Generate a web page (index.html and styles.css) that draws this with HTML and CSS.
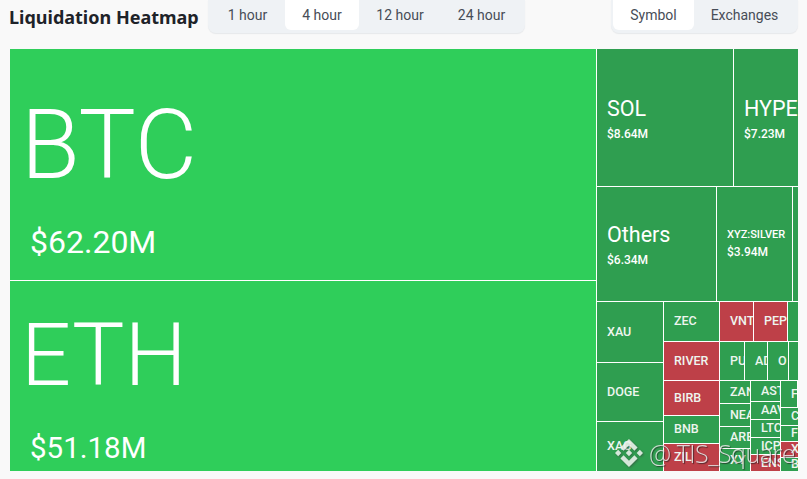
FILE: index.html
```html
<!DOCTYPE html>
<html lang="en">
<head>
<meta charset="utf-8">
<title>Liquidation Heatmap</title>
<link rel="stylesheet" href="styles.css">
</head>
<body>
<div class="page">
  <header class="head">
    <h1 class="title">Liquidation Heatmap</h1>
    <div class="tabs tabs-time">
      <span class="tab t-1">1 hour</span>
      <span class="tab t-4 on">4 hour</span>
      <span class="tab t-12">12 hour</span>
      <span class="tab t-24">24 hour</span>
    </div>
    <div class="tabs tabs-group">
      <span class="tab t-sym on">Symbol</span>
      <span class="tab t-ex">Exchanges</span>
    </div>
  </header>
  <main class="map">
    <div class="col" style="width:586px">
      <div class="tile up xl" style="height:231px"><span class="sym">BTC</span><span class="val">$62.20M</span></div>
      <div class="tile up xl eth" style="flex:1"><span class="sym">ETH</span><span class="val">$51.18M</span></div>
    </div>
    <div class="col" style="flex:1">
      <div class="row" style="height:137px">
        <div class="tile dn md" style="width:136px"><span class="sym">SOL</span><span class="val">$8.64M</span></div>
        <div class="tile dn md" style="flex:1"><span class="sym">HYPE</span><span class="val">$7.23M</span></div>
      </div>
      <div class="row" style="height:114px">
        <div class="tile dn md" style="width:119px"><span class="sym">Others</span><span class="val">$6.34M</span></div>
        <div class="tile dn sm" style="width:75px"><span class="sym">XYZ:SILVER</span><span class="val">$3.94M</span></div>
        <div class="tile dn fill" style="flex:1"></div>
      </div>
      <div class="row" style="flex:1">
        <div class="col" style="width:66px">
          <div class="tile dn xs" style="height:60px"><span class="sym">XAU</span></div>
          <div class="tile dn xs" style="height:58px"><span class="sym">DOGE</span></div>
          <div class="tile dn xs" style="flex:1"><span class="sym">XAG</span></div>
        </div>
        <div class="col" style="width:55px">
          <div class="tile dn xs" style="height:39px"><span class="sym">ZEC</span></div>
          <div class="tile rd xs" style="height:38px"><span class="sym">RIVER</span></div>
          <div class="tile rd xs" style="height:34px"><span class="sym">BIRB</span></div>
          <div class="tile dn xs" style="height:27px"><span class="sym">BNB</span></div>
          <div class="tile rd xs" style="flex:1"><span class="sym">ZIL</span></div>
        </div>
        <div class="col" style="flex:1">
          <div class="row" style="height:39px">
            <div class="tile rd xs" style="width:33px"><span class="sym">VNT</span></div>
            <div class="tile rd xs" style="width:33px"><span class="sym">PEP</span></div>
            <div class="tile dn fill" style="flex:1"></div>
          </div>
          <div class="row" style="height:38px">
            <div class="tile dn xs" style="width:24px"><span class="sym">PU</span></div>
            <div class="tile dn xs" style="width:22px"><span class="sym">AD</span></div>
            <div class="tile dn xs" style="width:20px"><span class="sym">O</span></div>
            <div class="tile dn fill" style="flex:1"></div>
          </div>
          <div class="row" style="flex:1">
            <div class="col" style="width:30px">
              <div class="tile dn xs" style="height:22px"><span class="sym">ZAN</span></div>
              <div class="tile dn xs" style="height:22px"><span class="sym">NEA</span></div>
              <div class="tile dn xs" style="height:21px"><span class="sym">ARE</span></div>
              <div class="tile dn xs" style="flex:1"><span class="sym">XY</span></div>
            </div>
            <div class="col" style="width:29px">
              <div class="tile dn xs" style="height:20px"><span class="sym">AST</span></div>
              <div class="tile dn xs" style="height:17px"><span class="sym">AAV</span></div>
              <div class="tile dn xs" style="height:17px"><span class="sym">LTC</span></div>
              <div class="tile dn xs" style="height:16px"><span class="sym">ICP</span></div>
              <div class="tile rd xs" style="flex:1"><span class="sym">ENS</span></div>
            </div>
            <div class="col" style="flex:1">
              <div class="tile dn xs inset" style="height:26px"><span class="sym">F</span></div>
              <div class="tile dn xs" style="height:17px"><span class="sym">C</span></div>
              <div class="tile dn xs" style="height:15px"><span class="sym">F</span></div>
              <div class="tile rd xs" style="height:15px"><span class="sym">X</span></div>
              <div class="tile dn xs" style="flex:1"><span class="sym">B</span></div>
            </div>
          </div>
        </div>
      </div>
    </div>
  </main>
  <div class="mark">
    <svg class="mark-logo" viewBox="0 0 24 24" aria-hidden="true"><path d="M16.624 13.9202l2.7175 2.7154-7.353 7.353-7.353-7.352 2.7175-2.7164 4.6355 4.6595 4.6356-4.6595zm4.6366-4.6366L24 12l-2.7154 2.7164L18.5682 12l2.6924-2.7164zm-9.272.001l2.7163 2.6914-2.7164 2.7174v-.001L9.2721 12l2.7164-2.7154zm-9.2722-.001L5.4088 12l-2.6914 2.6924L0 12l2.7164-2.7164zM11.9885.0115l7.353 7.329-2.7174 2.7154-4.6356-4.6356-4.6355 4.6595-2.7174-2.7154 7.353-7.353z"/></svg>
    <span class="mark-text">@ TIS_Square</span>
  </div>
</div>
</body>
</html>
```
FILE: styles.css
```css
* { box-sizing: border-box; }
html, body { margin: 0; padding: 0; }
body { background: #f9f9f9; font-family: Roboto, "Liberation Sans", sans-serif; overflow: hidden; }
.page { position: relative; width: 807px; height: 479px; overflow: hidden; padding: 0 9px 0 10px; }
.head { display: flex; align-items: flex-start; height: 49px; }
.title { margin: 5px 0 0 -1px; width: 199px; font-family: "Noto Sans", sans-serif; font-size: 18px; font-weight: 700; line-height: 24px; color: #1e2329; white-space: nowrap; }
.tabs { display: flex; height: 33px; padding: 0 0 3px; background: #eff2f5; border-radius: 0 0 8px 8px; box-shadow: 0 1px 1px #e6e8ea; }
.tabs-time { padding-left: 2px; width: 317px; }
.tabs-group { margin-left: auto; padding-left: 2px; width: 187px; }
.tab { display: flex; align-items: center; justify-content: center; font-size: 14px; color: #474d57; border-radius: 0 0 6px 6px; }
.tab.on { background: #fff; }
.t-1 { width: 75px; }
.t-4 { width: 74px; }
.t-12 { width: 82px; }
.t-24 { width: 81px; }
.t-sym { width: 81px; }
.t-ex { flex: 1; padding-right: 3px; }
.map { display: flex; gap: 1px; height: 422px; background: #fff; }
.col { display: flex; flex-direction: column; gap: 1px; min-width: 0; }
.row { display: flex; gap: 1px; min-height: 0; }
.tile { display: flex; flex-direction: column; justify-content: center; overflow: hidden; flex-shrink: 0; min-width: 0; min-height: 0; color: #fff; padding-left: 10px; white-space: nowrap; }
.up { background: #2fce5a; }
.dn { background: #2f9e50; }
.rd { background: #be4048; }
.fill { padding-left: 0; }
.inset { margin-right: 1px; }
.sym, .val { display: block; }
.xl { padding-left: 20px; }
.xl .sym { font-size: 96px; font-weight: 350; line-height: 106px; margin-left: -9px; margin-top: 24px; }
.xl .val { font-size: 32px; font-weight: 400; line-height: 40px; margin-top: 24px; }
.eth .sym { font-size: 88px; line-height: 100px; margin-left: -9px; margin-top: 20px; }
.eth .val { font-size: 29.5px; margin-top: 23px; }
.md .sym { font-size: 21.5px; line-height: 28px; margin-top: 2px; }
.md .val { font-size: 12px; font-weight: 500; line-height: 18px; margin-top: 2px; }
.sm .sym { font-size: 11px; font-weight: 500; line-height: 16px; }
.sm .val { font-size: 12px; font-weight: 500; line-height: 18px; }
.xs { padding-bottom: 1px; }
.xs .sym { font-size: 12.5px; font-weight: 500; line-height: 16px; color: #eef5ef; }
.mark { position: absolute; left: 615px; top: 439px; display: flex; align-items: center; gap: 6px; opacity: .88; white-space: nowrap; }
.mark-logo { width: 28px; height: 28px; fill: #eef2ee; filter: drop-shadow(1px 1px 1px rgba(60,60,60,.6)); }
.mark-text { font-family: "Open Sans", sans-serif; font-size: 25px; font-weight: 300; letter-spacing: -.5px; line-height: 28px; color: #e6e6e6; text-shadow: 1px 1px 1px rgba(30,30,30,.75); }
```
